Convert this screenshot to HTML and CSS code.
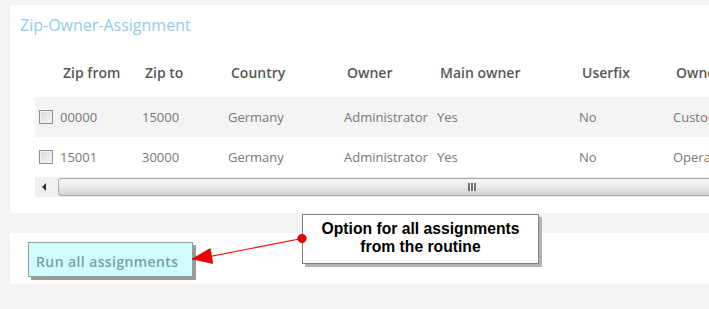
FILE: index.html
```html
<!DOCTYPE html>
<html>
<head>
<meta charset="utf-8">
<link rel="stylesheet" href="styles.css">
</head>
<body>
<div class="page">
  <section class="panel panel-main">
    <h2 class="title">Zip-Owner-Assignment</h2>
    <div class="table">
      <div class="row head">
        <div class="cell"></div>
        <div class="cell">Zip from</div>
        <div class="cell">Zip to</div>
        <div class="cell">Country</div>
        <div class="cell">Owner</div>
        <div class="cell">Main owner</div>
        <div class="cell">Userfix</div>
        <div class="cell">Owner type</div>
      </div>
      <div class="row data odd">
        <div class="cell check"><span class="box"></span></div>
        <div class="cell">00000</div>
        <div class="cell">15000</div>
        <div class="cell">Germany</div>
        <div class="cell">Administrator</div>
        <div class="cell">Yes</div>
        <div class="cell">No</div>
        <div class="cell">Customer</div>
      </div>
      <div class="row data">
        <div class="cell check"><span class="box"></span></div>
        <div class="cell">15001</div>
        <div class="cell">30000</div>
        <div class="cell">Germany</div>
        <div class="cell">Administrator</div>
        <div class="cell">Yes</div>
        <div class="cell">No</div>
        <div class="cell">Operator</div>
      </div>
      <div class="hscroll">
        <div class="sb-btn"><span class="sb-arrow"></span></div>
        <div class="sb-thumb"><span class="grip"><i></i><i></i><i></i></span></div>
      </div>
    </div>
  </section>
  <section class="panel panel-actions">
    <button class="run">Run all assignments</button>
  </section>

  <div class="callout">Option for all assignments<br>from the routine</div>
  <svg class="arrow" width="709" height="309" viewBox="0 0 709 309">
    <line x1="302" y1="238.5" x2="210" y2="256.5" stroke="#ff0000" stroke-width="1.2"/>
    <polygon points="192,259 210.2,248.5 212.8,263.5" fill="#ee0000" stroke="#b00000" stroke-width="0.6"/>
    <circle cx="302" cy="238.5" r="4.3" fill="#ee0000" stroke="#b00000" stroke-width="0.6"/>
  </svg>
</div>
</body>
</html>
```

FILE: styles.css
```css
html, body {
  margin: 0;
  padding: 0;
  background: #f4f4f4;
}

.page {
  position: relative;
  width: 709px;
  height: 309px;
  overflow: hidden;
  padding: 5px 0 0 10px;
  box-sizing: border-box;
  font-family: "Open Sans", "DejaVu Sans", sans-serif;
}

.panel {
  background: #ffffff;
  margin-right: -60px;
}

.panel-main {
  padding: 10px 0 16px 10px;
}

.title {
  margin: 0;
  font-size: 16px;
  line-height: 20px;
  font-weight: 400;
  color: #8fcde6;
}

.table {
  margin-left: 15px;
  width: 760px;
}

.row {
  display: grid;
  grid-template-columns: 25px 82px 86px 116px 93px 142px 94px 122px;
  align-items: center;
  white-space: nowrap;
}

.head {
  padding: 29px 0 15px;
  line-height: 18px;
  font-size: 14px;
  font-weight: 600;
  color: #585858;
}

.head .cell {
  padding-left: 3px;
}

.data {
  height: 40px;
  font-size: 13px;
  color: #777777;
}

.odd {
  background: #f4f4f4;
}

.check {
  padding-left: 4px;
  display: flex;
  align-items: center;
}

.box {
  display: block;
  width: 12px;
  height: 12px;
  border: 1px solid #8f8f8f;
  background: linear-gradient(135deg, #d8d8d8, #f6f6f6);
  box-shadow: inset 0 0 0 1px #f2f2f2;
}

.hscroll {
  display: flex;
  height: 20px;
  background: #ededed;
}

.sb-btn {
  width: 23px;
  display: flex;
  align-items: center;
  justify-content: center;
  background: #f0f0f0;
}

.sb-arrow {
  width: 0;
  height: 0;
  border-top: 4px solid transparent;
  border-bottom: 4px solid transparent;
  border-right: 4px solid #333333;
  margin-right: 5px;
}

.sb-thumb {
  flex: 1;
  margin: 1px 0;
  border: 1px solid #a8a8a8;
  border-radius: 3px;
  background: linear-gradient(to bottom, #f7f7f7 0%, #ececec 45%, #d2d2d2 100%);
  position: relative;
}

.grip {
  position: absolute;
  left: 409px;
  top: 4px;
  display: flex;
  gap: 1px;
}

.grip i {
  display: block;
  width: 2px;
  height: 8px;
  background: #707070;
  box-shadow: 1px 0 0 #f4f4f4;
}

.panel-actions {
  margin-top: 20px;
  padding: 9px 0 7px 18px;
}

.run {
  display: block;
  width: 165px;
  height: 35px;
  margin: 0;
  padding: 3px 0 0 7px;
  text-align: left;
  background: #cffcfd;
  border: 1px solid #9a9a9a;
  box-shadow: 3px 3px 0 #9a9a9a;
  font-family: "Open Sans", "DejaVu Sans", sans-serif;
  font-size: 14px;
  font-weight: 600;
  letter-spacing: 0.4px;
  color: #7aa0a0;
  box-sizing: border-box;
}

.callout {
  position: absolute;
  left: 302px;
  top: 214px;
  width: 237px;
  height: 50px;
  box-sizing: border-box;
  padding-top: 5px;
  background: #ffffff;
  border: 1px solid #808080;
  box-shadow: 3px 3px 0 #b4b4b4;
  font-family: "Liberation Sans", Arial, sans-serif;
  font-weight: 700;
  font-size: 15.7px;
  line-height: 18px;
  color: #000000;
  text-align: center;
}

.arrow {
  position: absolute;
  left: 0;
  top: 0;
  pointer-events: none;
}
```
